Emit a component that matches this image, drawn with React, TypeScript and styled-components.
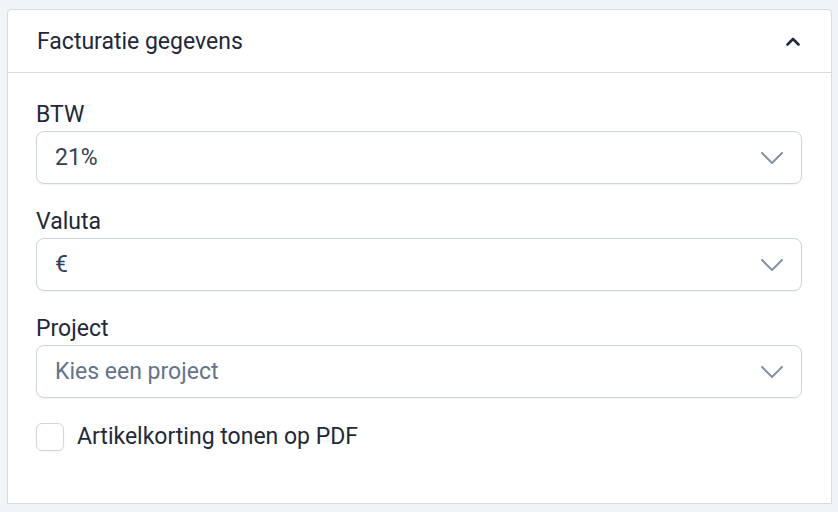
import React, { useState } from 'react'
import styled, { createGlobalStyle } from 'styled-components'

const GlobalStyle = createGlobalStyle`
    html, body {
        margin: 0;
        padding: 0;
        background: #f1f4f7;
        font-family: Roboto, "Liberation Sans", sans-serif;
    }
`

const ChevronDown = () => (
    <svg width="22" height="12" viewBox="0 0 22 12" fill="none">
        <polyline points="1,1 11,11 21,1" stroke="#8593a6" strokeWidth="2" strokeLinecap="round" strokeLinejoin="round" />
    </svg>
)

const ChevronUp = () => (
    <svg width="14" height="9" viewBox="0 0 14 9" fill="none">
        <polyline points="1.5,7.5 7,2 12.5,7.5" stroke="#1e293b" strokeWidth="2.6" strokeLinecap="round" strokeLinejoin="round" />
    </svg>
)

type FieldProps = { label: string; value: string; placeholder?: boolean }

const SelectField = ({ label, value, placeholder }: FieldProps) => (
    <Field>
        <Label>{label}</Label>
        <Select>
            <SelectValue $placeholder={placeholder}>{value}</SelectValue>
            <ChevronDown />
        </Select>
    </Field>
)

const App = () => {
    const [open, setOpen] = useState(true)
    const [checked, setChecked] = useState(false)

    return (
        <>
            <GlobalStyle />
            <Card>
                <Header onClick={() => setOpen(!open)}>
                    <Title>Facturatie gegevens</Title>
                    <ChevronUp />
                </Header>
                {open && (
                    <Body>
                        <SelectField label="BTW" value="21%" />
                        <SelectField label="Valuta" value="€" />
                        <SelectField label="Project" value="Kies een project" placeholder />
                        <CheckRow onClick={() => setChecked(!checked)}>
                            <Checkbox $checked={checked} />
                            <CheckLabel>Artikelkorting tonen op PDF</CheckLabel>
                        </CheckRow>
                    </Body>
                )}
            </Card>
        </>
    )
}

export default App

const Card = styled.section`
    margin: 9px 6px 0 7px;
    width: 825px;
    box-sizing: border-box;
    background: #fff;
    border: 1px solid #d5dbe1;
    border-radius: 4px 4px 0 0;
`

const Header = styled.div`
    display: flex;
    align-items: center;
    justify-content: space-between;
    height: 62px;
    padding: 0 31px 0 29px;
    border-bottom: 1px solid #d5dbe1;
    cursor: pointer;
`

const Title = styled.h2`
    margin: 0;
    font-size: 23px;
    font-weight: 400;
    color: #1e293b;
`

const Body = styled.div`
    padding: 29px 29px 52px 28px;
`

const Field = styled.div`
    margin-bottom: 25px;
`

const Label = styled.div`
    font-size: 23px;
    line-height: 26px;
    color: #1e293b;
    margin-bottom: 3px;
`

const Select = styled.div`
    display: flex;
    align-items: center;
    justify-content: space-between;
    height: 53px;
    box-sizing: border-box;
    padding: 0 18px 0 18px;
    border: 1px solid #cbd5e1;
    border-radius: 8px;
    box-shadow: 0 1px 2px rgba(15, 23, 42, 0.06);
    cursor: pointer;
`

const SelectValue = styled.span<{ $placeholder?: boolean }>`
    font-size: 23px;
    color: ${p => (p.$placeholder ? '#64748b' : '#334155')};
`

const CheckRow = styled.label`
    display: flex;
    align-items: center;
    gap: 13px;
    cursor: pointer;
`

const Checkbox = styled.span<{ $checked: boolean }>`
    width: 28px;
    height: 28px;
    box-sizing: border-box;
    border: 1px solid #cfd6df;
    border-radius: 6px;
    background: ${p => (p.$checked ? '#3b82f6' : '#fff')};
    box-shadow: 0 1px 2px rgba(15, 23, 42, 0.05);
`

const CheckLabel = styled.span`
    font-size: 23px;
    line-height: 28px;
    color: #1e293b;
`
